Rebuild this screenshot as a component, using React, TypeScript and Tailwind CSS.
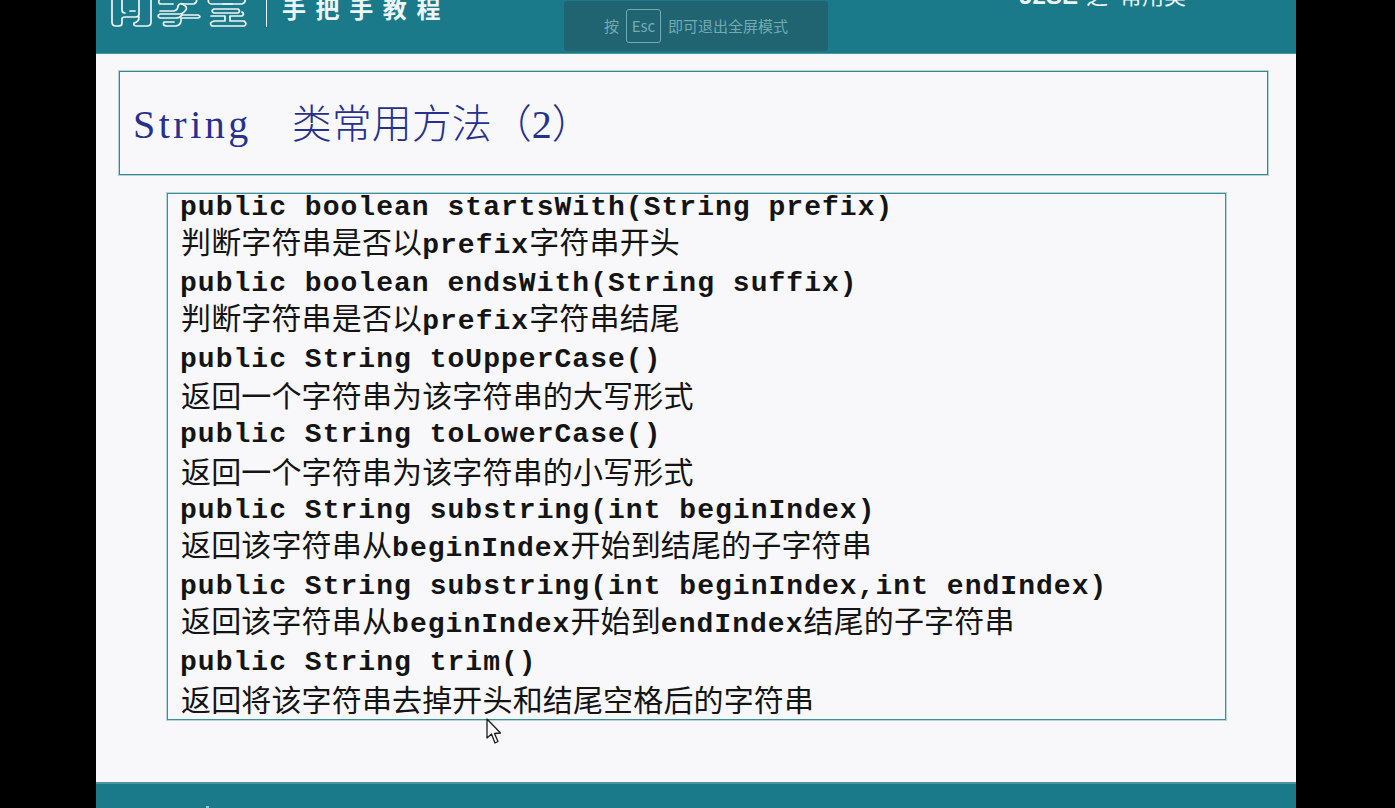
const rows: string[][] = [
  ["public boolean startsWith(String prefix)"],
  ["判断字符串是否以", "prefix", "字符串开头"],
  ["public boolean endsWith(String suffix)"],
  ["判断字符串是否以", "prefix", "字符串结尾"],
  ["public String toUpperCase()"],
  ["返回一个字符串为该字符串的大写形式"],
  ["public String toLowerCase()"],
  ["返回一个字符串为该字符串的小写形式"],
  ["public String substring(int beginIndex)"],
  ["返回该字符串从", "beginIndex", "开始到结尾的子字符串"],
  ["public String substring(int beginIndex,int endIndex)"],
  ["返回该字符串从", "beginIndex", "开始到", "endIndex", "结尾的子字符串"],
  ["public String trim()"],
  ["返回将该字符串去掉开头和结尾空格后的字符串"],
];

const isAscii = (s: string) => /^[\x00-\x7f]+$/.test(s);

function Row({ parts }: { parts: string[] }) {
  const mixed = parts.length > 1;
  const pureCjk = !mixed && !isAscii(parts[0]);
  return (
    <div
      className={`h-[37.9px] leading-[38px] whitespace-pre text-[30px] text-[#141414] ${mixed ? "-mt-[2px] mb-[2px] pl-[1px]" : ""} ${pureCjk ? "mt-[1px] -mb-[1px] pl-[1px]" : ""}`}
    >
      {parts.map((p, i) =>
        isAscii(p) ? (
          <span key={i} className="font-['Liberation_Mono',monospace] font-bold text-[28px] tracking-[1.03px]">
            {p}
          </span>
        ) : (
          <span key={i} className="font-['Noto_Sans_CJK_SC',sans-serif] font-normal tracking-[0.15px]">
            {p}
          </span>
        )
      )}
    </div>
  );
}

function Logo() {
  return (
    <svg width="138" height="28" viewBox="0 0 138 28" fill="none" stroke="#eef6f7" strokeWidth="1.7" strokeLinejoin="round" strokeLinecap="round">
      {/* first mark */}
      <path d="M2 -2 V22 Q2 26 6 26 H9 Q12 26 12 23 V19 Q12 17 15 17 H26 Q29 17 29 14 V-2" />
      <path d="M12 -2 V10 Q12 13 15 13" />
      <path d="M20 11 H25" />
      <path d="M41 -2 V22 Q41 26 37 26 H27 Q23 26 24 23 Q29 22 29 17" />
      {/* second mark */}
      <path d="M50 -2 Q47 4 51 4 H63 M72 4 H84 Q88 2 86 -2" />
      <path d="M50 11 H64 Q68 10 68 6 Q70 2 74 5 Q79 8 74 12 Q72 14 70 14 H50 Q46 16 50 18 H66 Q70 18 72 15 H88 Q92 17 88 18 H72" />
      <path d="M71 18 Q72 25 66 26 H56 Q52 25 54 22 H64" />
      {/* third mark */}
      <path d="M99 -2 Q97 3 101 4 H132 Q137 2 134 -2" />
      <path d="M113 2 H122" transform="translate(0 2)" />
      <path d="M104 9 H128 Q131 11 128 13 H104 Q100 11 104 9 Z" />
      <path d="M101 16 H115 V21 H104 Q98 23 102 26 H134 Q138 24 134 21 H120 V16 H132 Q135 14 132 12" />
    </svg>
  );
}

export default function App() {
  return (
    <div className="relative h-[808px] w-[1395px] overflow-hidden bg-black">
      <div className="ml-[96px] flex h-full w-[1200px] flex-col bg-[#f8f8fa]">
        {/* Header, cut off by the top of the screen */}
        <div className="flex h-[54px] shrink-0 items-start overflow-hidden border-b border-[#4d949e] bg-[#1a7a8a] pl-[14px]">
          <Logo />
          <div className="ml-[18px] h-[27px] w-px bg-[#e8f1f2]" />
          <div className="ml-[15px] -mt-[8px] font-['Noto_Sans_CJK_SC',sans-serif] text-[24px] leading-[32px] tracking-[9.6px] font-bold text-[#eef5f6]">
            手把手教程
          </div>
          <div className="ml-auto mr-[110px] -mt-[20px] flex items-baseline font-['Noto_Sans_CJK_SC',sans-serif] text-[22px] leading-[28px] text-[#eef5f6]">
            <span className="font-['Liberation_Sans',sans-serif] text-[24px] font-bold">J2SE</span>
            <span className="ml-[8px]">之</span>
            <span className="ml-[12px]">常用类</span>
          </div>
        </div>

        {/* Title */}
        <div className="ml-[23px] mt-[17px] flex h-[104px] w-[1149px] items-center border border-[#3d8590] pl-[13px] text-[#26308f] ring-1 ring-[#b4d2d6]">
          <div className="whitespace-pre">
            <span className="font-['Liberation_Serif',serif] text-[40px] tracking-[3.5px]">String</span>
            <span className="inline-block w-[40px]" />
            <span className="font-['Noto_Sans_CJK_SC',sans-serif] text-[40px] font-light">类常用方法（</span>
            <span className="font-['Liberation_Serif',serif] text-[40px]">2</span>
            <span className="font-['Noto_Sans_CJK_SC',sans-serif] text-[40px] font-light">）</span>
          </div>
        </div>

        {/* Method list */}
        <div className="ml-[71px] mt-[18px] h-[527px] w-[1059px] border border-[#3d8f99] pl-[12px] ring-1 ring-[#b4d6da]">
          <div className="-mt-[9px]">
            {rows.map((parts, i) => (
              <Row key={i} parts={parts} />
            ))}
          </div>
        </div>

        <div className="mt-auto h-[26px] shrink-0 overflow-hidden border-t-2 border-[#4d949e] bg-[#1a7a8a] pl-[110px] pt-[22px]">
          <div className="h-[2px] w-[3px] bg-[#9cc4ca]" />
        </div>
      </div>

      {/* Fullscreen hint */}
      <div className="absolute left-[564px] top-[1px] flex h-[50px] w-[264px] items-center rounded-[3px] bg-[#1f6470] pl-[40px] font-['Noto_Sans_CJK_SC',sans-serif] text-[15px] text-[#74aab0]">
        <span>按</span>
        <span className="ml-[7px] mr-[7px] flex h-[34px] w-[35px] items-center justify-center rounded-[3px] border border-[#74aab0]">
          Esc
        </span>
        <span>即可退出全屏模式</span>
      </div>

      {/* Mouse pointer */}
      <svg className="absolute left-[486px] top-[718px]" width="16" height="27" viewBox="0 0 16 27">
        <path d="M1 1 L1 20 L5.5 16 L9 25 L12 23.5 L8.5 15.5 L14.5 15 Z" fill="#fafafa" stroke="#1c1c1c" strokeWidth="1.3" strokeLinejoin="round" />
      </svg>
    </div>
  );
}
